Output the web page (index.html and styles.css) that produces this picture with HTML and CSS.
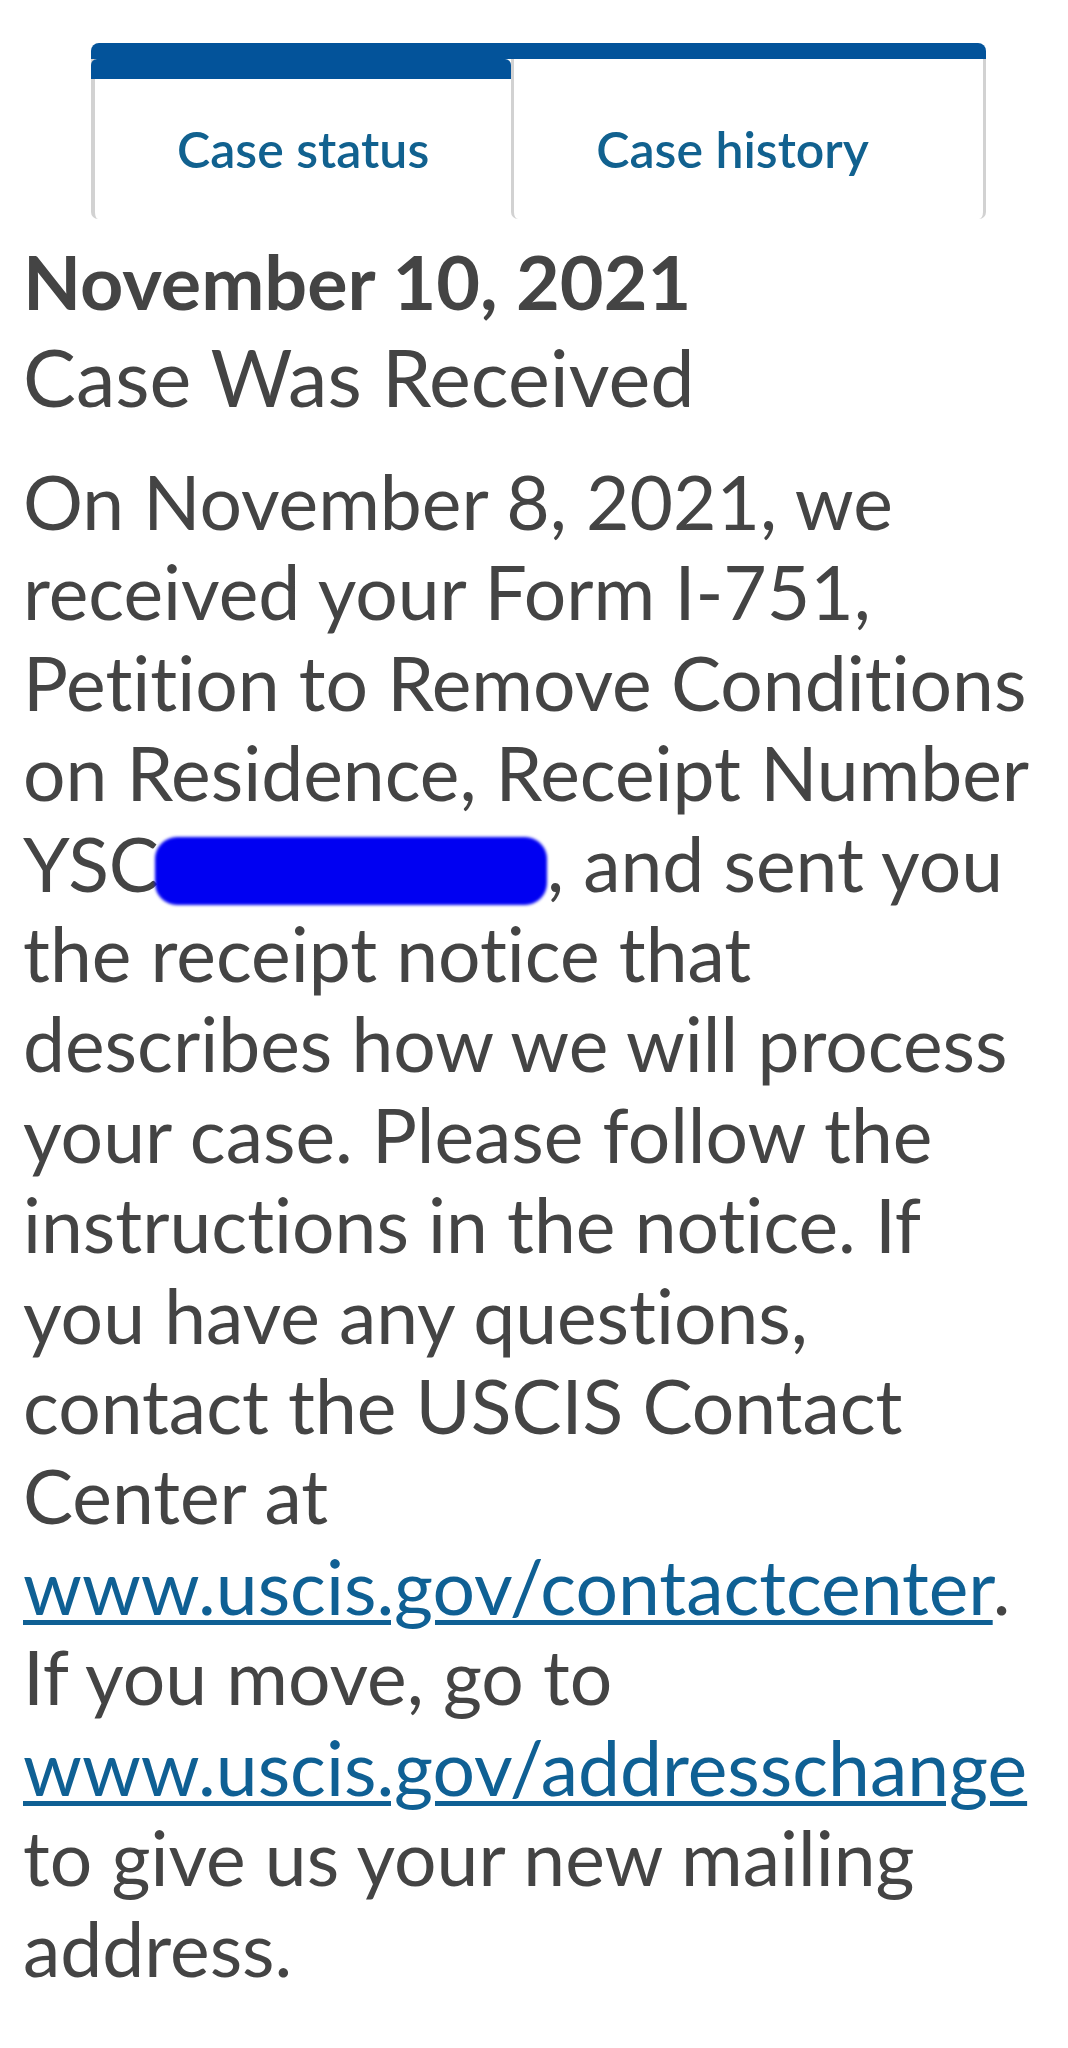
FILE: index.html
```html
<!DOCTYPE html>
<html lang="en">
<head>
    <meta charset="UTF-8">
    <meta name="viewport" content="width=device-width, initial-scale=1.0">
    <title>Case Status Online</title>
    <link rel="stylesheet" href="styles.css">
</head>
<body>
    <div class="tabs">
        <div class="tab active">Case status</div>
        <div class="tab">Case history</div>
    </div>
    <div class="case">
        <h1 class="case-date">November 10, 2021</h1>
        <h2 class="case-title">Case Was Received</h2>
        <p class="case-text">
            On November 8, 2021, we received your Form I-751, Petition to Remove Conditions on Residence, Receipt Number YSC<span class="redact"></span>, and sent you the receipt notice that describes how we will process your case. Please follow the instructions in the notice. If you have any questions, contact the USCIS Contact Center at <a href="#">www.uscis.gov/contactcenter</a>. If you move, go to <a href="#">www.uscis.gov/addresschange</a> to give us your new mailing address.
        </p>
    </div>
</body>
</html>
```

FILE: styles.css
```css
body {
    margin: 0;
    padding: 0;
    background-color: #fff;
    color: #444;
    font-family: Lato, "Open Sans", sans-serif;
    font-variant-ligatures: no-common-ligatures;
}
* {
    box-sizing: border-box;
}

.tabs {
    display: flex;
    margin: 43px 82px 0 91px;
    border-top: 16px solid #03539a;
    border-radius: 8px 8px 0 0;
}
.tab {
    position: relative;
    padding: 60px 82px 40px 82px;
    font-size: 50px;
    line-height: 60px;
    font-weight: 600;
    color: #11618f;
    white-space: nowrap;
    border-left: 3px solid #d2d2d2;
    border-radius: 0 0 0 7px;
}
.tab:first-child {
    border-left-width: 4px;
}
.tab:last-child {
    flex: 1;
    border-right: 3px solid #d2d2d2;
    border-radius: 0 0 7px 7px;
}
.tab.active::before {
    content: "";
    position: absolute;
    top: 0;
    left: -4px;
    right: 0;
    height: 20px;
    background-color: #03539a;
    border-radius: 6px 6px 0 0;
}

.case {
    padding: 17px 20px 40px 23px;
}
.case-date {
    margin: 0;
    font-size: 75.5px;
    line-height: 90px;
    font-weight: 700;
}
.case-title {
    margin: 6px 0 0 0;
    font-size: 79.2px;
    line-height: 90px;
    font-weight: 400;
}
.case-text {
    margin: 34px 0 0 0;
    font-size: 75px;
    line-height: 90.4px;
}
.case-text a {
    color: #0f6094;
    text-decoration: underline;
    text-decoration-thickness: 5px;
    text-underline-offset: 5px;
}
.redact {
    display: inline-block;
    width: 392px;
    height: 68px;
    margin-left: -4px;
    vertical-align: -13px;
    background-color: #0000f2;
    border-radius: 22px;
    filter: blur(1.5px);
}
```
